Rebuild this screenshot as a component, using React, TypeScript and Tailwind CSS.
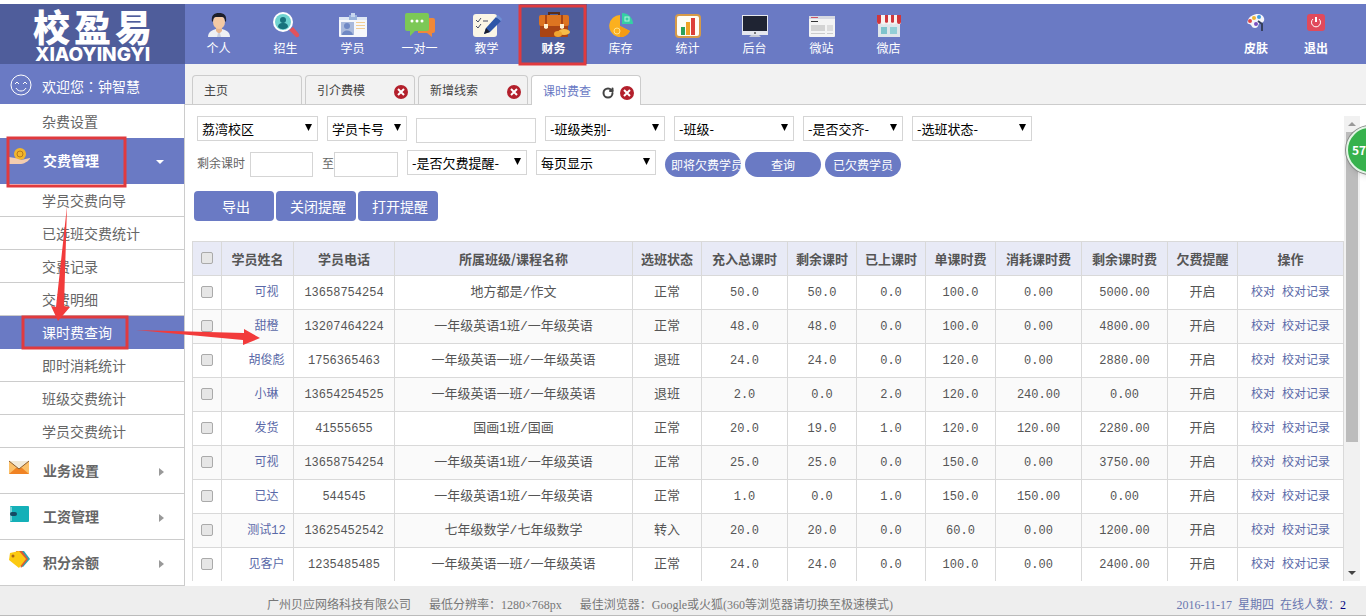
import React from 'react'
import { RotateCw } from 'lucide-react'

interface NavItem {
    label: string;
    icon: React.ReactNode;
    active?: boolean;
}

interface Tab {
    label: string;
    closable?: boolean;
    active?: boolean;
}

interface Column {
    label: string;
    width: number;
}

interface Lesson {
    name: string;
    phone: string;
    course: string;
    status: string;
    total: string;
    left: string;
    used: string;
    price: string;
    spent: string;
    balance: string;
}

const navItems: NavItem[] = [
    {
        label: '个人',
        icon: (
            <svg width="26" height="26" viewBox="0 0 26 26">
                <path d="M2 25c0-5 4-7 8-8h6c4 1 8 3 8 8z" fill="#eef0f4" />
                <path d="M10 15h6v4l-3 3-3-3z" fill="#e8b48e" />
                <ellipse cx="13" cy="10" rx="6" ry="7" fill="#f4c9a4" />
                <path d="M6 10C5 3 8 1 13 1s8 2 7 9l-1-1c0-2-1-4-3-4h-6C8 5 7 7 7 9z" fill="#1d1f2b" />
                <path d="M12 21h2l1 4h-4z" fill="#c9cede" />
            </svg>
        ),
    },
    {
        label: '招生',
        icon: (
            <svg width="28" height="26" viewBox="0 0 28 26">
                <path d="M17 18l4-3 6 7c1 2-1 4-3 3z" fill="#e2525c" />
                <circle cx="11" cy="10" r="10" fill="#fff" />
                <circle cx="11" cy="10" r="8" fill="#6fd3d0" />
                <circle cx="11" cy="8" r="3" fill="#18727c" />
                <path d="M6 15c0-3 2-4 4-4h2c2 0 4 1 4 4-3 3-7 3-10 0z" fill="#18727c" />
            </svg>
        ),
    },
    {
        label: '学员',
        icon: (
            <svg width="28" height="26" viewBox="0 0 28 26">
                <rect x="0" y="5" width="28" height="20" rx="1" fill="#f6f7fb" />
                <rect x="0" y="5" width="28" height="3" fill="#dfe8f5" />
                <rect x="10" y="3" width="8" height="5" fill="#9ab4dd" />
                <rect x="12" y="1" width="4" height="4" fill="#c7d6ee" />
                <rect x="2" y="10" width="13" height="13" fill="#a9b9dc" />
                <circle cx="8" cy="14" r="3" fill="#6f88c4" />
                <path d="M3 23c0-6 10-6 11 0z" fill="#6f88c4" />
                <path d="M17 10.500h9M17 13.500h9M17 16.500h9" stroke="#f3cd94" />
            </svg>
        ),
    },
    {
        label: '一对一',
        icon: (
            <svg width="30" height="26" viewBox="0 0 30 26">
                <path d="M13 6h15a2 2 0 0 1 2 2v11a2 2 0 0 1-2 2h-1v4l-5-4h-9z" fill="#f0883a" />
                <path d="M2 1h20a2 2 0 0 1 2 2v14a2 2 0 0 1-2 2H10l-5 5v-5H2a2 2 0 0 1-2-2V3a2 2 0 0 1 2-2z" fill="#7cc856" />
                <circle cx="7" cy="9" r="1.500" fill="#fff" />
                <circle cx="12" cy="9" r="1.500" fill="#fff" />
                <circle cx="17" cy="9" r="1.500" fill="#fff" />
            </svg>
        ),
    },
    {
        label: '教学',
        icon: (
            <svg width="30" height="26" viewBox="0 0 30 26">
                <rect x="1" y="2" width="24" height="23" rx="3" fill="#fbf6e6" />
                <path d="M4 8l2 2 3-4M4 14l2 2 3-4M11 9h5" stroke="#444b63" fill="none" />
                <path d="M12 22l2-6 10-11 5 4-11 11z" fill="#2d55a8" />
                <path d="M24 5l2-2 4 4-1 2z" fill="#6d8fd6" />
                <path d="M12 22l2-6 4 4z" fill="#1b1d2c" />
            </svg>
        ),
    },
    {
        label: '财务',
        active: true,
        icon: (
            <svg width="32" height="26" viewBox="0 0 32 26">
                <path d="M11 3V1h10v2" stroke="#5a2c19" strokeWidth="2" fill="none" />
                <rect x="2" y="10" width="28" height="15" rx="1" fill="#a94414" />
                <path d="M3 3h26a2 2 0 0 1 2 2v7a2 2 0 0 1-2 2H3a2 2 0 0 1-2-2V5a2 2 0 0 1 2-2z" fill="#dd7421" />
                <path d="M8 3v10M24 3v10" stroke="#a94414" strokeWidth="2" />
                <path d="M6 12h4v4l-2 1-2-1zM22 12h4v4l-2 1-2-1z" fill="#fff0d0" />
                <ellipse cx="26" cy="20" rx="6" ry="3" fill="#f8bd48" />
                <ellipse cx="20" cy="22" rx="4" ry="3" fill="#f2a52f" />
            </svg>
        ),
    },
    {
        label: '库存',
        icon: (
            <svg width="26" height="26" viewBox="0 0 26 26">
                <path d="M12 3v11l10 5A11 11 0 1 1 12 3z" fill="#fbb01f" />
                <path d="M12 14l10 5a11 11 0 0 1-10 6z" fill="#f39b14" />
                <path d="M14 1a11 11 0 0 1 11 11H14z" fill="#35cfa4" />
                <rect x="17" y="5" width="4" height="4" fill="none" stroke="#b3f5de" />
                <circle cx="9" cy="19" r="3" fill="none" stroke="#ffe08a" />
            </svg>
        ),
    },
    {
        label: '统计',
        icon: (
            <svg width="26" height="26" viewBox="0 0 26 26">
                <rect x="1" y="3" width="24" height="22" rx="3" fill="#fffdf4" stroke="#d69a48" strokeWidth="2" />
                <rect x="6" y="15" width="4" height="8" fill="#2da25a" />
                <rect x="11" y="10" width="4" height="13" fill="#f0a324" />
                <rect x="16" y="6" width="4" height="17" fill="#dd4038" />
            </svg>
        ),
    },
    {
        label: '后台',
        icon: (
            <svg width="28" height="26" viewBox="0 0 28 26">
                <rect x="1" y="3" width="26" height="20" fill="#e5e7ee" />
                <rect x="2" y="4" width="24" height="15" fill="#1f2433" />
                <path d="M10 23h8l2 2H8z" fill="#c5c9d6" />
                <circle cx="14" cy="21" r="1" fill="#555" />
            </svg>
        ),
    },
    {
        label: '微站',
        icon: (
            <svg width="28" height="26" viewBox="0 0 28 26">
                <rect x="1" y="4" width="26" height="21" rx="1" fill="#f4f4f4" />
                <rect x="1" y="4" width="26" height="3" fill="#d6d9e2" />
                <path d="M3 5.500h7" stroke="#c56" />
                <path d="M3 9.500h7" stroke="#333" />
                <rect x="3" y="13" width="14" height="6" fill="#d3d3d3" />
                <rect x="19" y="13" width="6" height="6" fill="#ddd" />
                <path d="M3 21.500h14M19 21.500h6" stroke="#ccc" />
            </svg>
        ),
    },
    {
        label: '微店',
        icon: (
            <svg width="26" height="26" viewBox="0 0 26 26">
                <rect x="2" y="10" width="22" height="15" fill="#dfe6ea" />
                <path d="M1 3h24v7a2 2 0 0 1-5 0 2 2 0 0 1-5 0 2 2 0 0 1-5 0 2 2 0 0 1-5 0 2 2 0 0 1-4 0z" fill="#f7f3f0" />
                <path d="M1 3h4v7a2 2 0 0 1-4 0zM9 3h3v7a2 2 0 0 1-3 0zM15 3h3v7a2 2 0 0 1-3 0zM21 3h4v7a2 2 0 0 1-4 0z" fill="#d0363c" />
                <rect x="5" y="15" width="6" height="7" fill="#7fc3cc" />
                <rect x="14" y="15" width="7" height="7" fill="#93cfd6" />
            </svg>
        ),
    },
];

const tabs: Tab[] = [
    { label: '主页' },
    { label: '引介费模', closable: true },
    { label: '新增线索', closable: true },
    { label: '课时费查', closable: true, active: true },
];

const subMenu = [
    '学员交费向导',
    '已选班交费统计',
    '交费记录',
    '交费明细',
    '课时费查询',
    '即时消耗统计',
    '班级交费统计',
    '学员交费统计',
];

const groups: NavItem[] = [
    {
        label: '业务设置',
        icon: (
            <svg width="20" height="16" viewBox="0 0 20 16">
                <rect y="1" width="20" height="13" fill="#fbc069" />
                <path d="M0 14l7-6h6l7 6z" fill="#f08324" />
                <path d="M0 1h20l-10 8z" fill="#f1ead9" />
                <path d="M0 1l10 8 10-8" stroke="#8a5a2c" fill="none" />
            </svg>
        ),
    },
    {
        label: '工资管理',
        icon: (
            <svg width="20" height="16" viewBox="0 0 20 16">
                <rect x="1" width="19" height="16" rx="1" fill="#14b0b8" />
                <path d="M2 1v14" stroke="#d8f4f4" />
                <rect x="1" y="6" width="7" height="4" rx="2" fill="#154a63" />
            </svg>
        ),
    },
    {
        label: '积分余额',
        icon: (
            <svg width="21" height="18" viewBox="0 0 21 18">
                <path d="M9 0h6l6 8-7 8-5-2z" fill="#28a6b5" />
                <path d="M7 0h6l6 8-7 9z" fill="#dc5b33" />
                <path d="M1 2l9-2 7 8-7 9-10-8z" fill="#fcca12" />
                <circle cx="4" cy="5" r="1.500" fill="#a8651a" />
            </svg>
        ),
    },
];

const columns: Column[] = [
    { label: '学员姓名', width: 72 },
    { label: '学员电话', width: 101 },
    { label: '所属班级/课程名称', width: 238 },
    { label: '选班状态', width: 69 },
    { label: '充入总课时', width: 86 },
    { label: '剩余课时', width: 69 },
    { label: '已上课时', width: 69 },
    { label: '单课时费', width: 70 },
    { label: '消耗课时费', width: 86 },
    { label: '剩余课时费', width: 86 },
    { label: '欠费提醒', width: 70 },
    { label: '操作', width: 106 },
];

const lessons: Lesson[] = [
    { name: '可视', phone: '13658754254', course: '地方都是/作文', status: '正常', total: '50.0', left: '50.0', used: '0.0', price: '100.0', spent: '0.00', balance: '5000.00' },
    { name: '甜橙', phone: '13207464224', course: '一年级英语1班/一年级英语', status: '正常', total: '48.0', left: '48.0', used: '0.0', price: '100.0', spent: '0.00', balance: '4800.00' },
    { name: '胡俊彪', phone: '1756365463', course: '一年级英语一班/一年级英语', status: '退班', total: '24.0', left: '24.0', used: '0.0', price: '120.0', spent: '0.00', balance: '2880.00' },
    { name: '小琳', phone: '13654254525', course: '一年级英语一班/一年级英语', status: '退班', total: '2.0', left: '0.0', used: '2.0', price: '120.0', spent: '240.00', balance: '0.00' },
    { name: '发货', phone: '41555655', course: '国画1班/国画', status: '正常', total: '20.0', left: '19.0', used: '1.0', price: '120.0', spent: '120.00', balance: '2280.00' },
    { name: '可视', phone: '13658754254', course: '一年级英语1班/一年级英语', status: '正常', total: '25.0', left: '25.0', used: '0.0', price: '150.0', spent: '0.00', balance: '3750.00' },
    { name: '已达', phone: '544545', course: '一年级英语1班/一年级英语', status: '正常', total: '1.0', left: '0.0', used: '1.0', price: '150.0', spent: '150.00', balance: '0.00' },
    { name: '测试12', phone: '13625452542', course: '七年级数学/七年级数学', status: '转入', total: '20.0', left: '20.0', used: '0.0', price: '60.0', spent: '0.00', balance: '1200.00' },
    { name: '见客户', phone: '1235485485', course: '一年级英语一班/一年级英语', status: '正常', total: '24.0', left: '24.0', used: '0.0', price: '100.0', spent: '0.00', balance: '2400.00' },
];

function FilterSelect({ label, className }: { label: string; className: string }) {
    return (
        <div className={`relative h-[25px] ${className}`}>
            <select aria-label={label} className="h-full w-full appearance-none rounded-none border border-[#d5d5d5] bg-white pl-1 text-[13px] leading-[23px] text-black">
                <option>{label}</option>
            </select>
            <svg className="pointer-events-none absolute right-1.5 top-2" width="7" height="7" viewBox="0 0 7 7">
                <path d="M0 0h7L3.500 7z" fill="#000" />
            </svg>
        </div>
    );
}

function CloseIcon() {
    return (
        <svg width="14" height="14" viewBox="0 0 14 14">
            <circle cx="7" cy="7" r="7" fill="#b3202c" />
            <path d="M4 4l6 6M10 4l-6 6" stroke="#fff" strokeWidth="2" />
        </svg>
    );
}

function Header() {
    return (
        <header className="flex h-[60px] shrink-0 bg-[#6a7ac4] text-white">
            <div className="flex w-[185px] flex-col items-center bg-[#4f5d9b] pt-0.5">
                <div className="flex gap-1 text-[37px] font-black leading-10">
                    <span>校</span>
                    <span>盈</span>
                    <span>易</span>
                </div>
                <div className="font-[Inter] text-[19px] font-extrabold leading-[18px]">XIAOYINGYI</div>
            </div>
            <nav className="flex">
                {navItems.map((item) => (
                    <a
                        key={item.label}
                        href="#"
                        className={`flex w-[67px] flex-col items-center gap-0.5 pt-2 text-xs ${item.active ? 'bg-[#4f5d9b] font-bold' : ''}`}
                    >
                        {item.icon}
                        {item.label}
                    </a>
                ))}
            </nav>
            <div className="ml-auto flex pr-5 text-xs font-bold">
                <a href="#" className="flex w-[60px] flex-col items-center gap-2 pt-2">
                    <svg width="20" height="20" viewBox="0 0 20 20">
                        <path d="M2 8c2-6 14-9 16-2 1 4-2 5-4 5s-1 5-5 5C5 16 6 12 3 12c-2 0-2-2-1-4z" fill="#f5f5fa" />
                        <circle cx="4" cy="9" r="2" fill="#e04848" />
                        <circle cx="8" cy="6" r="2" fill="#eeb52f" />
                        <circle cx="13" cy="5" r="2" fill="#3d9be0" />
                        <circle cx="10" cy="12" r="2" fill="#7a50c0" />
                        <path d="M12 9l4 3v7" stroke="#36405e" strokeWidth="2" fill="none" />
                    </svg>
                    皮肤
                </a>
                <a href="#" className="flex w-[60px] flex-col items-center gap-2 pt-2">
                    <svg width="20" height="20" viewBox="0 0 20 20">
                        <rect x="1" y="2" width="18" height="17" rx="3" fill="#e04a5c" />
                        <path d="M7 7a4.500 4.500 0 1 0 6 0" stroke="#fff" fill="none" />
                        <path d="M10 5v5" stroke="#fff" strokeWidth="2" />
                    </svg>
                    退出
                </a>
            </div>
        </header>
    );
}

function Sidebar() {
    return (
        <aside className="flex w-[185px] shrink-0 flex-col border-r border-[#ccc] bg-white text-sm text-[#666]">
            <div className="-mr-px flex h-10 items-center gap-2 bg-[#6a7ac4] pl-2.5 pt-1 text-white">
                <svg width="24" height="24" viewBox="0 0 24 24" fill="none" stroke="#fff">
                    <circle cx="11" cy="11" r="10" />
                    <path d="M5 10l2-2 2 2M13 10l2-2 2 2M6 14c2 4 8 4 10 0" />
                </svg>
                <span className="leading-5">
                    欢迎您<span className="font-['Noto_Sans_CJK_TC',sans-serif]">：</span>钟智慧
                </span>
            </div>
            <a href="#" className="flex h-[34px] items-center pl-[42px]">杂费设置</a>
            <a href="#" className="flex h-[46px] items-center bg-[#6a7ac4] pb-0.5 pl-[9px] font-bold text-white">
                <svg className="mb-2" width="22" height="18" viewBox="0 0 22 18">
                    <circle cx="11" cy="7" r="6" fill="#f2b62c" />
                    <circle cx="11" cy="7" r="3" fill="none" stroke="#b8791a" />
                    <path d="M0 10l6 1 6 2 9-2c1 1-5 6-9 6H0z" fill="#f3cdb0" />
                </svg>
                <span className="ml-3">交费管理</span>
                <svg className="ml-auto mr-5 mt-1" width="8" height="4" viewBox="0 0 8 4">
                    <path d="M0 0h8L4 4z" fill="#fff" />
                </svg>
            </a>
            {subMenu.map((label) => (
                <a
                    key={label}
                    href="#"
                    className={`flex h-[33px] items-center border-b pl-[42px] ${label === '课时费查询' ? 'border-[#6a7ac4] bg-[#6a7ac4] text-white' : 'border-[#ccc]'}`}
                >
                    {label}
                </a>
            ))}
            {groups.map((group) => (
                <a key={group.label} href="#" className="flex h-[46px] items-center border-b border-[#ccc] pb-0.5 pl-[9px] font-bold">
                    <span className="mb-1 w-[22px]">{group.icon}</span>
                    <span className="ml-3">{group.label}</span>
                    <svg className="ml-auto mr-5 mt-1" width="5" height="8" viewBox="0 0 5 8">
                        <path d="M0 0v8l5-4z" fill="#999" />
                    </svg>
                </a>
            ))}
        </aside>
    );
}

function TabBar() {
    return (
        <div className="flex h-[41px] shrink-0 items-end gap-[3px] border-b border-[#ccc] bg-[#f2f2f2] pl-[7px] text-xs text-[#444]">
            {tabs.map((tab) => (
                <div
                    key={tab.label}
                    className={`flex w-[110px] items-center rounded-t border border-b-0 border-[#ccc] pl-[11px] pr-1.5 ${tab.active ? '-mb-px h-[30px] bg-white text-[#6a7ac4]' : 'h-[29px]'}`}
                >
                    <a href="#">{tab.label}</a>
                    <div className="ml-auto flex items-center gap-1.5 pt-1">
                        {tab.active && (
                            <button aria-label="刷新">
                                <RotateCw size={12} strokeWidth={4} className="text-[#444]" />
                            </button>
                        )}
                        {tab.closable && (
                            <button aria-label="关闭">
                                <CloseIcon />
                            </button>
                        )}
                    </div>
                </div>
            ))}
        </div>
    );
}

function Filters() {
    return (
        <div className="pl-[5px] text-xs text-[#666]">
            <div className="flex h-[34px] items-start gap-[9px]">
                <FilterSelect label="荔湾校区" className="w-[121px]" />
                <FilterSelect label="学员卡号" className="w-20" />
                <input aria-label="学员卡号" className="mt-0.5 h-[25px] w-[120px] border border-[#d5d5d5]" />
                <FilterSelect label="-班级类别-" className="w-[120px]" />
                <FilterSelect label="-班级-" className="w-[120px]" />
                <FilterSelect label="-是否交齐-" className="w-[100px]" />
                <FilterSelect label="-选班状态-" className="w-[120px]" />
            </div>
            <div className="flex h-[41px] items-start gap-[9px]">
                <div className="flex">
                    <label htmlFor="hours-from" className="w-[53px] leading-[25px]">剩余课时</label>
                    <input id="hours-from" className="mt-0.5 h-[25px] w-[63px] border border-[#d5d5d5]" />
                </div>
                <div className="flex">
                    <label htmlFor="hours-to" className="leading-[25px]">至</label>
                    <input id="hours-to" className="mt-0.5 h-[25px] w-16 border border-[#d5d5d5]" />
                </div>
                <FilterSelect label="-是否欠费提醒-" className="w-[120px]" />
                <FilterSelect label="每页显示" className="w-[120px]" />
                <div className="flex gap-1 pt-0.5">
                    {['即将欠费学员', '查询', '已欠费学员'].map((label) => (
                        <button key={label} className="h-[25px] w-[76px] overflow-hidden whitespace-nowrap rounded-full bg-[#6a7ac4] px-1.5 text-xs text-white">
                            {label}
                        </button>
                    ))}
                </div>
            </div>
        </div>
    );
}

function LessonTable() {
    const cell = 'border border-[#d9d9d9] p-0';
    const num = 'border border-[#d9d9d9] p-0 text-xs';
    const check = 'mx-auto -mt-0.5 block h-3 w-3 appearance-none rounded-xs border border-[#aaa] bg-[#e6e6e6]';
    return (
        <table className="w-full table-fixed border-collapse text-center font-['Liberation_Mono','Noto_Sans_CJK_SC',monospace] text-[13px] text-[#555]">
            <colgroup>
                <col style={{ width: 29 }} />
                {columns.map((col) => (
                    <col key={col.label} style={{ width: col.width }} />
                ))}
            </colgroup>
            <thead>
                <tr className="h-[34px] bg-[#e8eaf6] font-['Noto_Sans_CJK_SC',sans-serif]">
                    <th className={cell}>
                        <input type="checkbox" aria-label="全选" className={check} />
                    </th>
                    {columns.map((col) => (
                        <th key={col.label} className={cell}>{col.label}</th>
                    ))}
                </tr>
            </thead>
            <tbody>
                {lessons.map((row, i) => (
                    <tr key={i} className="h-[34px] even:bg-[#fafafa]">
                        <td className={cell}>
                            <input type="checkbox" aria-label={row.name} className={check} />
                        </td>
                        <td className={`${num} text-[#5a69a8]`}>
                            <a href="#" className="pl-[18px]">{row.name}</a>
                        </td>
                        <td className={num}>{row.phone}</td>
                        <td className={cell}>{row.course}</td>
                        <td className={cell}>{row.status}</td>
                        <td className={num}>{row.total}</td>
                        <td className={num}>{row.left}</td>
                        <td className={num}>{row.used}</td>
                        <td className={num}>{row.price}</td>
                        <td className={num}>{row.spent}</td>
                        <td className={num}>{row.balance}</td>
                        <td className={cell}>开启</td>
                        <td className={`${num} whitespace-nowrap text-[#5a69a8]`}>
                            <a href="#">校对</a> <a href="#">校对记录</a>
                        </td>
                    </tr>
                ))}
            </tbody>
        </table>
    );
}

function ScrollBar() {
    return (
        <div className="flex w-4 shrink-0 flex-col items-center bg-[#f1f1f1]">
            <svg className="my-1.5 shrink-0" width="8" height="4" viewBox="0 0 8 4">
                <path d="M0 4h8L4 0z" fill="#999" />
            </svg>
            <div className="h-2/3 w-3 bg-[#bcbcbc]" />
            <svg className="mb-1.5 mt-auto shrink-0" width="8" height="4" viewBox="0 0 8 4">
                <path d="M0 0h8L4 4z" fill="#444" />
            </svg>
        </div>
    );
}

// red marker boxes and arrows lying over the page
function Markers() {
    return (
        <svg className="pointer-events-none absolute left-0 top-0" width="600" height="360" viewBox="0 0 600 360">
            <g fill="none" stroke="#e03a3e" strokeWidth="3">
                <rect x="520" y="6" width="65" height="58" />
                <rect x="8" y="138" width="117" height="48" />
                <rect x="23" y="317" width="104" height="31" />
            </g>
            <path d="M67 206l-3 100 6 1-12 14-7-15 5 1z" fill="#f23b3b" />
            <path d="M136 330l108 3v-4l16 9-17 7v-5z" fill="#f23b3b" />
        </svg>
    );
}

export default function App() {
    return (
        <div className="relative flex h-screen flex-col overflow-hidden bg-white pt-1 font-['Noto_Sans_CJK_SC',sans-serif]">
            <Header />
            <div className="flex min-h-0 flex-1">
                <Sidebar />
                <main className="flex min-w-0 flex-1 flex-col">
                    <TabBar />
                    <div className="mb-[5px] mt-[11px] flex min-h-0 flex-1 pl-[7px] pr-1.5">
                        <div className="min-w-0 flex-1 overflow-hidden">
                            <Filters />
                            <div className="mb-5 flex gap-0.5 pl-0.5">
                                {['导出', '关闭提醒', '打开提醒'].map((label) => (
                                    <button key={label} className="h-[30px] w-20 rounded-sm bg-[#6a7ac4] pl-1 text-sm text-white">
                                        {label}
                                    </button>
                                ))}
                            </div>
                            <LessonTable />
                        </div>
                        <ScrollBar />
                    </div>
                </main>
            </div>
            <footer className="flex h-[30px] shrink-0 items-center border-b border-[#bbb] bg-[#eee] pl-[267px] pr-5 pt-2 font-['Liberation_Serif','Noto_Sans_CJK_SC',serif] text-xs text-[#777]">
                <div className="flex gap-[18px]">
                    <span>广州贝应网络科技有限公司</span>
                    <span>最低分辨率：1280×768px</span>
                    <span>最佳浏览器：Google或火狐(360等浏览器请切换至极速模式)</span>
                </div>
                <div className="ml-auto text-[#6a77b0]">
                    2016-11-17&nbsp; 星期四&nbsp; 在线人数：<span className="text-[#000080]">2</span>
                </div>
            </footer>
            <div className="absolute -right-7 top-[126px] flex h-12 w-12 items-center rounded-full border-2 border-[#e3f5e6] bg-[#37b24d] pl-1 text-xs font-bold text-white shadow-md ring-1 ring-[#888]">
                57
            </div>
            <Markers />
        </div>
    );
}
